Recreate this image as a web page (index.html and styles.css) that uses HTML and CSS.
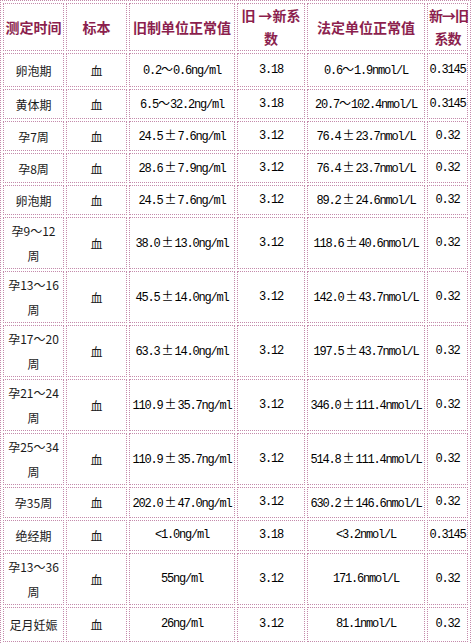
FILE: index.html
```html
<!DOCTYPE html>
<html lang="zh">
<head>
<meta charset="utf-8">
<title>测定时间</title>
<link rel="stylesheet" href="styles.css">
</head>
<body>
<table class="tbl">
  <tr class="r-head">
    <th class="c1">测定时间</th>
    <th class="c2">标本</th>
    <th class="c3">旧制单位正常值</th>
    <th class="c4">旧 →新系<br>数</th>
    <th class="c5">法定单位正常值</th>
    <th class="c6 tight">新→旧<br>系数</th>
  </tr>
  <tr class="r-first">
    <td class="cn">卵泡期</td><td class="cn">血</td>
    <td class="v">0.2<span class="fw">～</span>0.6ng/ml</td><td class="v">3.18</td>
    <td class="v">0.6<span class="fw">～</span>1.9nmol/L</td><td class="v">0.3145</td>
  </tr>
  <tr class="r-one">
    <td class="cn">黄体期</td><td class="cn">血</td>
    <td class="v">6.5<span class="fw">～</span>32.2ng/ml</td><td class="v">3.18</td>
    <td class="v">20.7<span class="fw">～</span>102.4nmol/L</td><td class="v">0.3145</td>
  </tr>
  <tr class="r-one">
    <td class="cn">孕7周</td><td class="cn">血</td>
    <td class="v">24.5<span class="pm">±</span>7.6ng/ml</td><td class="v">3.12</td>
    <td class="v">76.4<span class="pm">±</span>23.7nmol/L</td><td class="v">0.32</td>
  </tr>
  <tr class="r-one">
    <td class="cn">孕8周</td><td class="cn">血</td>
    <td class="v">28.6<span class="pm">±</span>7.9ng/ml</td><td class="v">3.12</td>
    <td class="v">76.4<span class="pm">±</span>23.7nmol/L</td><td class="v">0.32</td>
  </tr>
  <tr class="r-one">
    <td class="cn">卵泡期</td><td class="cn">血</td>
    <td class="v">24.5<span class="pm">±</span>7.6ng/ml</td><td class="v">3.12</td>
    <td class="v">89.2<span class="pm">±</span>24.6nmol/L</td><td class="v">0.32</td>
  </tr>
  <tr class="r-two">
    <td class="cn">孕9～12<br>周</td><td class="cn">血</td>
    <td class="v">38.0<span class="pm">±</span>13.0ng/ml</td><td class="v">3.12</td>
    <td class="v">118.6<span class="pm">±</span>40.6nmol/L</td><td class="v">0.32</td>
  </tr>
  <tr class="r-two">
    <td class="cn">孕13～16<br>周</td><td class="cn">血</td>
    <td class="v">45.5<span class="pm">±</span>14.0ng/ml</td><td class="v">3.12</td>
    <td class="v">142.0<span class="pm">±</span>43.7nmol/L</td><td class="v">0.32</td>
  </tr>
  <tr class="r-two">
    <td class="cn">孕17～20<br>周</td><td class="cn">血</td>
    <td class="v">63.3<span class="pm">±</span>14.0ng/ml</td><td class="v">3.12</td>
    <td class="v">197.5<span class="pm">±</span>43.7nmol/L</td><td class="v">0.32</td>
  </tr>
  <tr class="r-two">
    <td class="cn">孕21～24<br>周</td><td class="cn">血</td>
    <td class="v">110.9<span class="pm">±</span>35.7ng/ml</td><td class="v">3.12</td>
    <td class="v">346.0<span class="pm">±</span>111.4nmol/L</td><td class="v">0.32</td>
  </tr>
  <tr class="r-two">
    <td class="cn">孕25～34<br>周</td><td class="cn">血</td>
    <td class="v">110.9<span class="pm">±</span>35.7ng/ml</td><td class="v">3.12</td>
    <td class="v">514.8<span class="pm">±</span>111.4nmol/L</td><td class="v">0.32</td>
  </tr>
  <tr class="r-mid">
    <td class="cn">孕35周</td><td class="cn">血</td>
    <td class="v">202.0<span class="pm">±</span>47.0ng/ml</td><td class="v">3.12</td>
    <td class="v">630.2<span class="pm">±</span>146.6nmol/L</td><td class="v">0.32</td>
  </tr>
  <tr class="r-mid">
    <td class="cn">绝经期</td><td class="cn">血</td>
    <td class="v">&lt;1.0ng/ml</td><td class="v">3.18</td>
    <td class="v">&lt;3.2nmol/L</td><td class="v">0.3145</td>
  </tr>
  <tr class="r-two">
    <td class="cn">孕13～36<br>周</td><td class="cn">血</td>
    <td class="v">55ng/ml</td><td class="v">3.12</td>
    <td class="v">171.6nmol/L</td><td class="v">0.32</td>
  </tr>
  <tr class="r-last">
    <td class="cn">足月妊娠</td><td class="cn">血</td>
    <td class="v">26ng/ml</td><td class="v">3.12</td>
    <td class="v">81.1nmol/L</td><td class="v">0.32</td>
  </tr>
</table>
</body>
</html>
```

FILE: styles.css
```css
html, body {
  margin: 0;
  padding: 0;
  background: #ffffff;
}

.tbl {
  width: 471px;
  table-layout: fixed;
  border-collapse: separate;
  border-spacing: 2px;
  border: 1px dotted #c48aab;
  font-family: "Noto Sans CJK SC", sans-serif;
  font-size: 12px;
  color: #333333;
}

.tbl th,
.tbl td {
  box-sizing: border-box;
  border: 1px dotted #c48aab;
  padding: 0 1px;
  text-align: center;
  vertical-align: middle;
  line-height: 25px;
  white-space: nowrap;
}

.tbl th {
  font-family: "Noto Sans CJK SC", sans-serif;
  font-size: 14px;
  font-weight: bold;
  line-height: 23px;
  color: #8c1f4e;
}

.tbl th.tight {
  letter-spacing: -1px;
}

.c1 { width: 61px; }
.c2 { width: 61px; }
.c3 { width: 106px; }
.c4 { width: 68px; }
.c5 { width: 118px; }
.c6 { width: 41px; }

.r-head th { height: 48px; }
.r-first td { height: 34px; }
.r-one td { height: 30px; }
.r-mid td { height: 31px; }
.r-two td { height: 52px; }
.r-last td { height: 35px; }

.cn {
  font-family: "Noto Sans CJK SC", sans-serif;
  font-size: 12px;
  color: #1a1a1a;
}

.v {
  font-family: "Liberation Mono", "Noto Sans CJK SC", monospace;
  font-size: 12px;
  letter-spacing: -1.2px;
  color: #000000;
}

.fw,
.pm {
  font-family: "Noto Sans CJK SC", sans-serif;
  font-size: 12px;
  letter-spacing: 0;
}

.pm {
  margin: 0 1px 0 2px;
}
```
